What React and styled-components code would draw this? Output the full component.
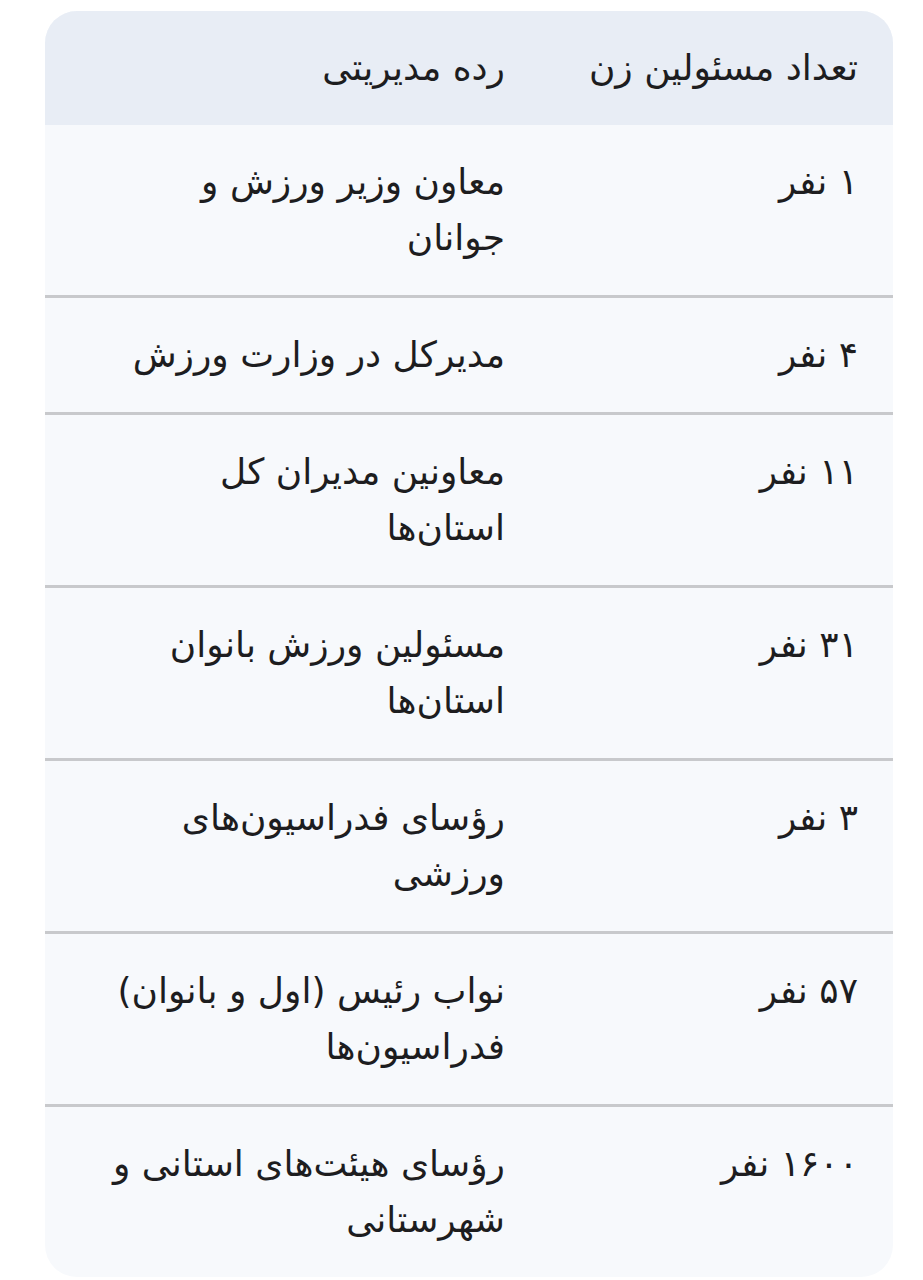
import React from "react"
import styled, { createGlobalStyle } from "styled-components"

const GlobalStyle = createGlobalStyle`
  html, body {
    margin: 0;
    padding: 0;
    background: #ffffff;
  }
  body {
    font-family: "DejaVu Sans", "Noto Sans", sans-serif;
  }
`

const Page = styled.div`
  padding: 11px 30px 0 45px;
  direction: rtl;
`

const Card = styled.div`
  background: #f7f9fc;
  border-radius: 32px;
  overflow: hidden;
`

const Table = styled.table`
  width: 100%;
  border-collapse: collapse;
  table-layout: fixed;
  color: #1d1d1f;
  font-size: 36px;
  line-height: 56px;
`

const HeadRow = styled.tr`
  background: #e8edf5;
`

const Row = styled.tr`
  border-top: ${(p) => (p.$first ? "none" : "3px solid #c8c9cc")};
`

const HeadCell = styled.th`
  font-weight: normal;
  text-align: right;
  vertical-align: top;
  padding: 29px 35px 29px 20px;
  width: ${(p) => p.$w || "auto"};
  white-space: nowrap;
`

const Cell = styled.td`
  text-align: right;
  vertical-align: top;
  padding: 29px 35px 29px 20px;
  white-space: nowrap;
`

const Line = styled.span`
  display: block;
`

const rows = [
  ["۱ نفر", ["معاون وزیر ورزش و", "جوانان"]],
  ["۴ نفر", ["مدیرکل در وزارت ورزش"]],
  ["۱۱ نفر", ["معاونین مدیران کل", "استان‌ها"]],
  ["۳۱ نفر", ["مسئولین ورزش بانوان", "استان‌ها"]],
  ["۳ نفر", ["رؤسای فدراسیون‌های", "ورزشی"]],
  ["۵۷ نفر", ["نواب رئیس (اول و بانوان)", "فدراسیون‌ها"]],
  ["۱۶۰۰ نفر", ["رؤسای هیئت‌های استانی و", "شهرستانی"]],
]

const App = () => {
  return (
    <>
      <GlobalStyle />
      <Page>
        <Card>
          <Table>
            <thead>
              <HeadRow>
                <HeadCell $w="298px">تعداد مسئولین زن</HeadCell>
                <HeadCell>رده مدیریتی</HeadCell>
              </HeadRow>
            </thead>
            <tbody>
              {rows.map((r, i) => (
                <Row key={i} $first={i === 0}>
                  <Cell>{r[0]}</Cell>
                  <Cell>
                    {r[1].map((l, j) => (
                      <Line key={j}>{l}</Line>
                    ))}
                  </Cell>
                </Row>
              ))}
            </tbody>
          </Table>
        </Card>
      </Page>
    </>
  )
}

export default App
